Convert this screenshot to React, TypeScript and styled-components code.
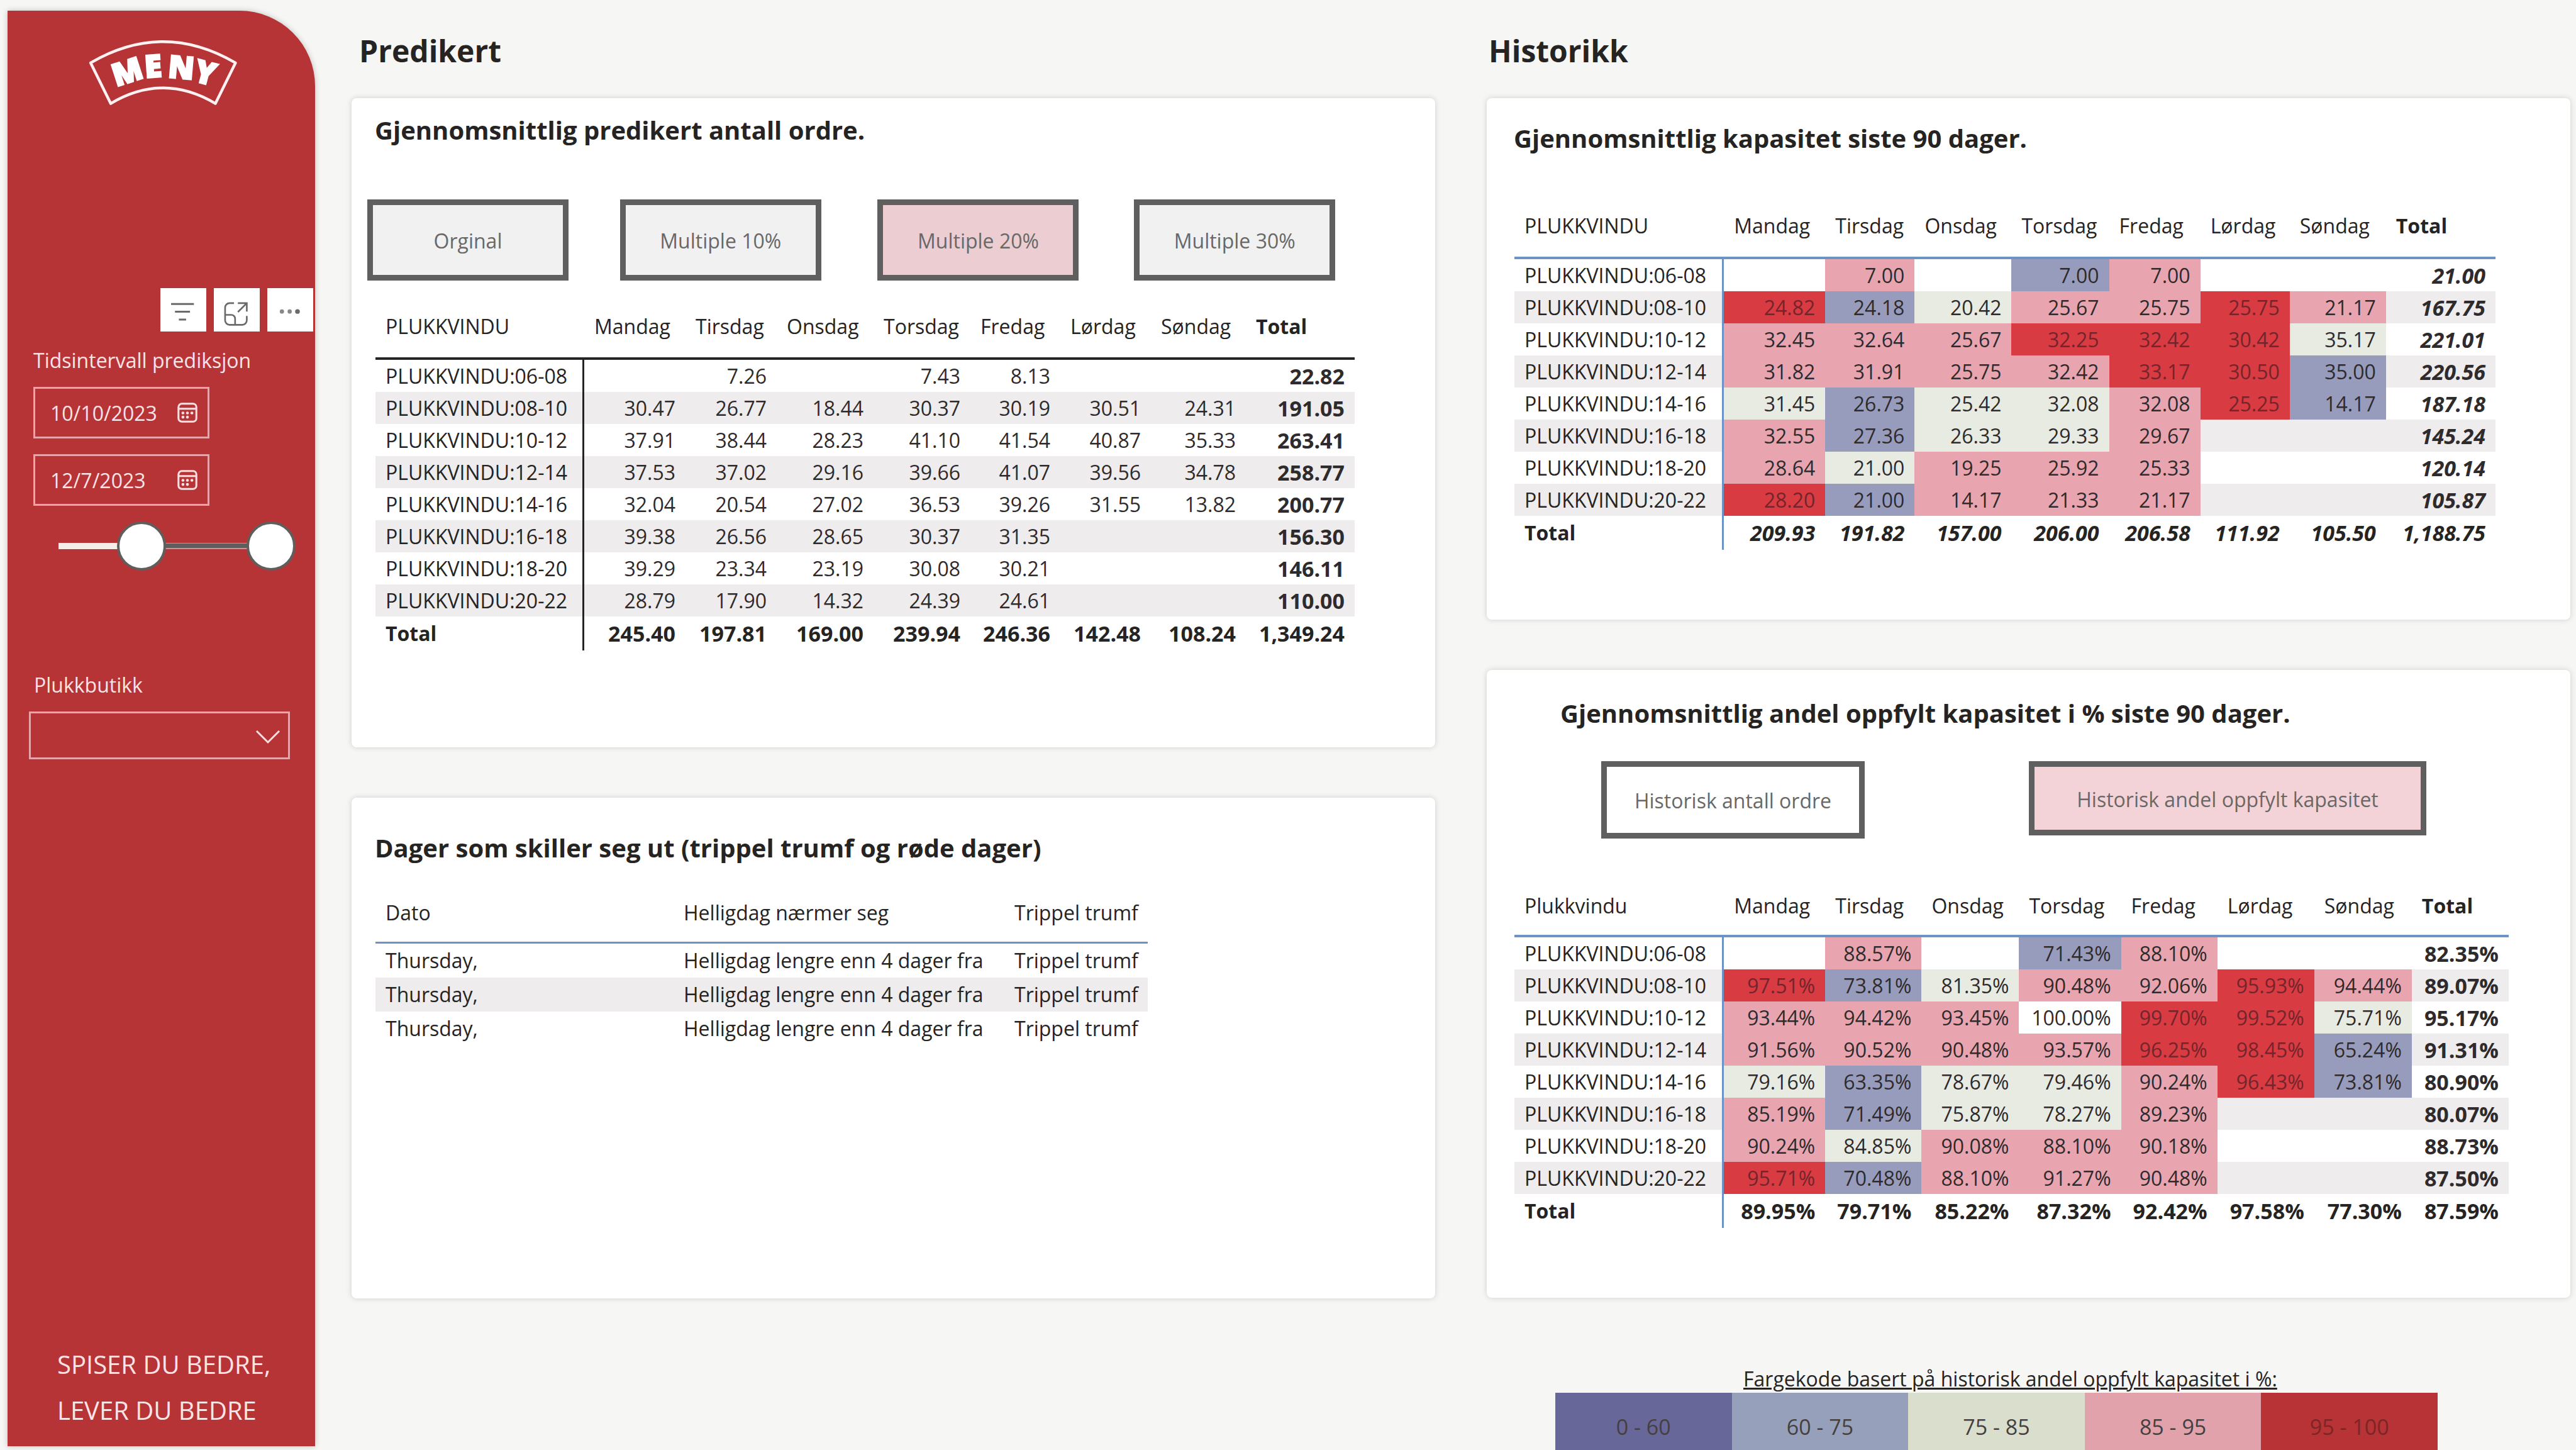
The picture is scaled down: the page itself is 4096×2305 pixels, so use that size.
import React from "react";
import styled, { createGlobalStyle, css } from "styled-components";

const GlobalStyle = createGlobalStyle`
  *, *::before, *::after { box-sizing: border-box; }
  body {
    margin: 0;
    background: #f6f6f5;
    color: #252423;
    font-family: "Open Sans", "Noto Sans", sans-serif;
    font-size: 32px;
  }
  button, input, select { font: inherit; color: inherit; }
  h1, h2, p { margin: 0; }
`;

const Page = styled.div`
  display: grid;
  grid-template-columns: 489px minmax(0, 1fr);
  column-gap: 58px;
  min-height: 100vh;
  padding: 0 9px 0 12px;
`;

/* ---------- Sidebar ---------- */

const Sidebar = styled.aside`
  display: flex;
  flex-direction: column;
  margin: 17px 0 6px;
  padding-top: 36px;
  background: #b63436;
  color: #fbe3e5;
  border-top-right-radius: 120px;
  box-shadow: 0 0 10px rgba(0, 0, 0, 0.22);
`;

const Logo = styled.svg`
  display: block;
  width: 267px;
  height: 124px;
  margin-left: 112px;
`;

const VisualActions = styled.div`
  display: flex;
  justify-content: flex-end;
  gap: 12px;
  margin-top: 281px;
  padding-right: 3px;
`;

const ActionButton = styled.button`
  width: 73px;
  height: 69px;
  padding: 0;
  border: 0;
  background: #fff;

  svg { display: block; width: 100%; height: 100%; }
`;

const FieldLabel = styled.label`
  display: block;
  padding-left: 42px;
  line-height: 44px;
`;

const DateSlicer = styled.fieldset`
  display: flex;
  flex-direction: column;
  gap: 25px;
  min-width: 0;
  margin: 24px 0 0;
  padding: 0;
  border: 0;

  legend {
    padding: 0 0 20px 41px;
    line-height: 44px;
  }
`;

const DateBox = styled.div`
  display: flex;
  align-items: center;
  width: 280px;
  height: 82px;
  margin-left: 41px;
  padding: 0 16px 0 24px;
  border: 3px solid #e9a3a9;

  input {
    width: 100%;
    min-width: 0;
    padding: 0;
    border: 0;
    background: transparent;
    outline: none;
  }
`;

const CalendarButton = styled.button`
  flex: none;
  width: 32px;
  height: 32px;
  padding: 0;
  border: 0;
  background: transparent;

  svg { display: block; width: 32px; height: 32px; }
`;

const RangeSlider = styled.div`
  position: relative;
  width: 416px;
  height: 78px;
  margin: 0 0 0 42px;
`;

const Track = styled.div`
  position: absolute;
  inset: 34px 39px;
  background: #f5efea;
`;

const TrackFill = styled.div`
  height: 100%;
  border: solid #dd8a90;
  border-width: 1px 0 2px;
  background: #605e5c;
`;

const thumb = css`
  appearance: none;
  width: 78px;
  height: 78px;
  border: 4px solid #605e5c;
  border-radius: 50%;
  background: #fff;
  pointer-events: auto;
`;

const Range = styled.input`
  position: absolute;
  inset: 0;
  width: 100%;
  height: 78px;
  margin: 0;
  appearance: none;
  background: transparent;
  pointer-events: none;

  &::-webkit-slider-thumb { ${thumb} }
  &::-moz-range-thumb { ${thumb} }
`;

const StoreField = styled.div`
  margin-top: 160px;
`;

const SelectBox = styled.div`
  position: relative;
  width: 415px;
  margin: 20px 0 0 34px;

  select {
    display: block;
    width: 100%;
    height: 76px;
    padding: 0 80px 0 20px;
    border: 3px solid #e9a3a9;
    border-radius: 0;
    background: transparent;
    appearance: none;
  }

  svg {
    position: absolute;
    right: 15px;
    top: 28px;
    width: 40px;
    height: 24px;
    pointer-events: none;
  }
`;

const Slogan = styled.p`
  margin-top: auto;
  padding: 0 0 21px 79px;
  font-size: 40px;
  line-height: 73px;
`;

/* ---------- Report ---------- */

const Main = styled.main`
  display: grid;
  grid-template-columns: minmax(0, 1fr) minmax(0, 1fr);
  column-gap: 82px;
`;

const Column = styled.section<{ $end?: number }>`
  display: flex;
  flex-direction: column;
  padding-bottom: ${(p) => p.$end ?? 0}px;
`;

const ColumnHeading = styled.h1<{ $inset: number }>`
  padding: 49px 0 43px ${(p) => p.$inset}px;
  font-size: 48px;
  line-height: 64px;
  font-weight: 700;
`;

const Card = styled.article<{ $top: number; $bottom?: number; $grow?: boolean }>`
  flex: ${(p) => (p.$grow ? "1 0 auto" : "none")};
  padding: ${(p) => p.$top}px 0 ${(p) => p.$bottom ?? 0}px;
  border-radius: 8px;
  background: #fff;
  box-shadow: 0 0 10px rgba(0, 0, 0, 0.16);

  & + & { margin-top: 80px; }
`;

const CardTitle = styled.h2<{ $inset: number }>`
  padding-left: ${(p) => p.$inset}px;
  font-size: 40px;
  line-height: 56px;
  font-weight: 700;
`;

const ScenarioButtons = styled.div`
  display: grid;
  grid-template-columns: 402fr 410fr 408fr 321fr;
  margin: 82px 158px 0 25px;
`;

const HistoryButtons = styled.div`
  display: flex;
  justify-content: space-between;
  align-items: flex-start;
  margin: 48px 229px 0 182px;
`;

const ToggleButton = styled.button<{ $w: number; $h: number; $bg: string }>`
  width: ${(p) => p.$w}px;
  height: ${(p) => p.$h}px;
  padding: 2px 0 0;
  border: 9px solid #605f5f;
  background: ${(p) => p.$bg};
  color: #696867;
`;

type Tone = "r" | "p" | "b" | "g" | ".";
const toneColor: Record<Tone, string> = {
  r: "#d83b42",
  p: "#e8a5b0",
  b: "#979cbd",
  g: "#e8ebe2",
  ".": "transparent",
};

const TableWrap = styled.div<{ $top: number; $left: number; $right: number }>`
  margin: ${(p) => p.$top}px ${(p) => p.$right}px 0 ${(p) => p.$left}px;
`;

const DataTable = styled.table<{ $line: string; $head: number; $row: number; $rule: number }>`
  width: 100%;
  table-layout: fixed;
  border-collapse: separate;
  border-spacing: 0;
  line-height: 44px;

  th, td {
    padding: 0 16px;
    font-weight: 400;
    text-align: left;
    white-space: nowrap;
  }
  thead th {
    height: ${(p) => p.$head}px;
    border-bottom: ${(p) => p.$rule}px solid ${(p) => p.$line};
  }
  tbody tr { height: ${(p) => p.$row}px; }
  tbody tr:nth-child(even) { background: #eeecec; }
`;

const Matrix = styled(DataTable)<{ $italic?: boolean }>`
  td { text-align: right; }
  thead th:last-child, tfoot th { font-weight: 700; }
  tbody th, tfoot th { border-right: 3px solid ${(p) => p.$line}; }
  tfoot tr { height: 54px; }
  tfoot td, tbody td:last-child {
    padding-left: 0;
    font-size: 34px;
    font-weight: 700;
    font-style: ${(p) => (p.$italic ? "italic" : "normal")};
  }
`;

const ValueCell = styled.td<{ $tone: Tone }>`
  background: ${(p) => toneColor[p.$tone]};
  color: ${(p) => (p.$tone === "r" ? "#74242a" : "#2f2a2b")};
`;

/* ---------- Legend ---------- */

const Legend = styled.section`
  flex: 1;
  display: flex;
  flex-direction: column;
  margin: 107px 211px 0 109px;
`;

const LegendTitle = styled.h2`
  padding-left: 299px;
  font-size: 32px;
  font-weight: 400;
  line-height: 44px;
  text-decoration: underline;
`;

const LegendScale = styled.ul`
  flex: 1;
  display: grid;
  grid-template-columns: repeat(5, 1fr);
  margin: 0;
  padding: 0;
  list-style: none;
`;

const LegendStep = styled.li<{ $bg: string; $fg?: string }>`
  padding-top: 30px;
  background: ${(p) => p.$bg};
  color: ${(p) => p.$fg ?? "#45403f"};
  font-size: 34px;
  line-height: 48px;
  text-align: center;
`;

/* ---------- Data ---------- */

const days = ["Mandag", "Tirsdag", "Onsdag", "Torsdag", "Fredag", "Lørdag", "Søndag", "Total"];

type MatrixRow = { slot: string; values: string[]; tones?: string };

const predicted: MatrixRow[] = [
  { slot: "06-08", values: ["", "7.26", "", "7.43", "8.13", "", "", "22.82"] },
  { slot: "08-10", values: ["30.47", "26.77", "18.44", "30.37", "30.19", "30.51", "24.31", "191.05"] },
  { slot: "10-12", values: ["37.91", "38.44", "28.23", "41.10", "41.54", "40.87", "35.33", "263.41"] },
  { slot: "12-14", values: ["37.53", "37.02", "29.16", "39.66", "41.07", "39.56", "34.78", "258.77"] },
  { slot: "14-16", values: ["32.04", "20.54", "27.02", "36.53", "39.26", "31.55", "13.82", "200.77"] },
  { slot: "16-18", values: ["39.38", "26.56", "28.65", "30.37", "31.35", "", "", "156.30"] },
  { slot: "18-20", values: ["39.29", "23.34", "23.19", "30.08", "30.21", "", "", "146.11"] },
  { slot: "20-22", values: ["28.79", "17.90", "14.32", "24.39", "24.61", "", "", "110.00"] },
];
const predictedTotal = ["245.40", "197.81", "169.00", "239.94", "246.36", "142.48", "108.24", "1,349.24"];

const capacity: MatrixRow[] = [
  { slot: "06-08", tones: ".p.bp..", values: ["", "7.00", "", "7.00", "7.00", "", "", "21.00"] },
  { slot: "08-10", tones: "rbgpprp", values: ["24.82", "24.18", "20.42", "25.67", "25.75", "25.75", "21.17", "167.75"] },
  { slot: "10-12", tones: "ppprrrg", values: ["32.45", "32.64", "25.67", "32.25", "32.42", "30.42", "35.17", "221.01"] },
  { slot: "12-14", tones: "pppprrb", values: ["31.82", "31.91", "25.75", "32.42", "33.17", "30.50", "35.00", "220.56"] },
  { slot: "14-16", tones: "gbggprb", values: ["31.45", "26.73", "25.42", "32.08", "32.08", "25.25", "14.17", "187.18"] },
  { slot: "16-18", tones: "pbggp..", values: ["32.55", "27.36", "26.33", "29.33", "29.67", "", "", "145.24"] },
  { slot: "18-20", tones: "pgppp..", values: ["28.64", "21.00", "19.25", "25.92", "25.33", "", "", "120.14"] },
  { slot: "20-22", tones: "rbppp..", values: ["28.20", "21.00", "14.17", "21.33", "21.17", "", "", "105.87"] },
];
const capacityTotal = ["209.93", "191.82", "157.00", "206.00", "206.58", "111.92", "105.50", "1,188.75"];

const filled: MatrixRow[] = [
  { slot: "06-08", tones: ".p.bp..", values: ["", "88.57%", "", "71.43%", "88.10%", "", "", "82.35%"] },
  { slot: "08-10", tones: "rbgpprp", values: ["97.51%", "73.81%", "81.35%", "90.48%", "92.06%", "95.93%", "94.44%", "89.07%"] },
  { slot: "10-12", tones: "ppp.rrg", values: ["93.44%", "94.42%", "93.45%", "100.00%", "99.70%", "99.52%", "75.71%", "95.17%"] },
  { slot: "12-14", tones: "pppprrb", values: ["91.56%", "90.52%", "90.48%", "93.57%", "96.25%", "98.45%", "65.24%", "91.31%"] },
  { slot: "14-16", tones: "gbggprb", values: ["79.16%", "63.35%", "78.67%", "79.46%", "90.24%", "96.43%", "73.81%", "80.90%"] },
  { slot: "16-18", tones: "pbggp..", values: ["85.19%", "71.49%", "75.87%", "78.27%", "89.23%", "", "", "80.07%"] },
  { slot: "18-20", tones: "pgppp..", values: ["90.24%", "84.85%", "90.08%", "88.10%", "90.18%", "", "", "88.73%"] },
  { slot: "20-22", tones: "rbppp..", values: ["95.71%", "70.48%", "88.10%", "91.27%", "90.48%", "", "", "87.50%"] },
];
const filledTotal = ["89.95%", "79.71%", "85.22%", "87.32%", "92.42%", "97.58%", "77.30%", "87.59%"];

const legend = [
  { label: "0 - 60", bg: "#68679a" },
  { label: "60 - 75", bg: "#96a0bb" },
  { label: "75 - 85", bg: "#d9decd" },
  { label: "85 - 95", bg: "#e2a2ab" },
  { label: "95 - 100", bg: "#b83335", fg: "#7d2526" },
];

/* ---------- Parts ---------- */

type MatrixProps = {
  corner: string;
  rows: MatrixRow[];
  total: string[];
  columns: number[];
  line: string;
  head: number;
  italic?: boolean;
};

function SlotMatrix({ corner, rows, total, columns, line, head, italic }: MatrixProps) {
  return (
    <Matrix $line={line} $head={head} $row={51} $rule={4} $italic={italic}>
      <colgroup>
        {columns.map((w, i) => (
          <col key={i} width={w} />
        ))}
      </colgroup>
      <thead>
        <tr>
          <th scope="col">{corner}</th>
          {days.map((d) => (
            <th key={d} scope="col">{d}</th>
          ))}
        </tr>
      </thead>
      <tbody>
        {rows.map((r) => (
          <tr key={r.slot}>
            <th scope="row">PLUKKVINDU:{r.slot}</th>
            {r.values.map((v, i) => (
              <ValueCell key={i} $tone={(r.tones?.[i] ?? ".") as Tone}>{v}</ValueCell>
            ))}
          </tr>
        ))}
      </tbody>
      <tfoot>
        <tr>
          <th scope="row">Total</th>
          {total.map((v, i) => (
            <td key={i}>{v}</td>
          ))}
        </tr>
      </tfoot>
    </Matrix>
  );
}

function CalendarIcon() {
  return (
    <svg viewBox="0 0 36 36" fill="none" stroke="#fbdfe2" strokeWidth="3.4" aria-hidden="true">
      <rect x="2" y="2" width="32" height="32" rx="6" />
      <path d="M2 11h32" />
      <g fill="#fbdfe2" stroke="none">
        <circle cx="10" cy="18.5" r="2.6" />
        <circle cx="18" cy="18.5" r="2.6" />
        <circle cx="26" cy="18.5" r="2.6" />
        <circle cx="10" cy="26" r="2.6" />
        <circle cx="18" cy="26" r="2.6" />
      </g>
    </svg>
  );
}

function DateField({ label, value }: { label: string; value: string }) {
  return (
    <DateBox>
      <input type="text" aria-label={label} defaultValue={value} />
      <CalendarButton type="button" aria-label={label}>
        <CalendarIcon />
      </CalendarButton>
    </DateBox>
  );
}

export default function App() {
  const [from, setFrom] = React.useState(39);
  const [to, setTo] = React.useState(100);

  return (
    <>
      <GlobalStyle />
      <Page>
        <Sidebar>
          <Logo viewBox="0 0 300 140" role="img" aria-label="MENY">
            <path
              d="M22 53Q152 -23 282 53L246 126Q152 70 58 126Z"
              fill="none"
              stroke="#fff0f1"
              strokeWidth="5"
              strokeLinejoin="round"
            />
            <text
              x="68 120 160 205"
              y="96 80 79 85"
              rotate="-18 -4 5 15"
              fill="#fff"
              stroke="#fff"
              strokeWidth="3"
              fontFamily="Open Sans"
              fontWeight="800"
              fontSize="56"
            >
              MENY
            </text>
          </Logo>

          <VisualActions>
            <ActionButton type="button" aria-label="Filter">
              <svg viewBox="0 0 82 78" stroke="#6b6a69" strokeWidth="3.4" fill="none">
                <path d="M19 28.500H60M26 42.500H53M33 56.500H46" />
              </svg>
            </ActionButton>
            <ActionButton type="button" aria-label="Fokusmodus">
              <svg viewBox="0 0 82 78" stroke="#6b6a69" strokeWidth="3" fill="none">
                <path d="M36 27H28a8 8 0 0 0-8 8V58a8 8 0 0 0 8 8H51a8 8 0 0 0 8-8V50" />
                <path d="M20 48H31a7 7 0 0 1 7 7V66M43 27H59V42M43 43L59 27" />
              </svg>
            </ActionButton>
            <ActionButton type="button" aria-label="Flere valg">
              <svg viewBox="0 0 82 78" fill="#6b6a69">
                <circle cx="26" cy="42" r="3.800" opacity="0.8" />
                <circle cx="40" cy="42" r="3.800" opacity="0.8" />
                <circle cx="54" cy="42" r="4.200" />
              </svg>
            </ActionButton>
          </VisualActions>

          <DateSlicer>
            <legend>Tidsintervall prediksjon</legend>
            <DateField label="Fra dato" value="10/10/2023" />
            <DateField label="Til dato" value="12/7/2023" />
            <RangeSlider>
              <Track>
                <TrackFill style={{ marginLeft: `${from}%`, width: `${to - from}%` }} />
              </Track>
              <Range
                type="range"
                aria-label="Fra"
                value={from}
                onChange={(e) => setFrom(Math.min(Number(e.target.value), to))}
              />
              <Range
                type="range"
                aria-label="Til"
                value={to}
                onChange={(e) => setTo(Math.max(Number(e.target.value), from))}
              />
            </RangeSlider>
          </DateSlicer>

          <StoreField>
            <FieldLabel htmlFor="store">Plukkbutikk</FieldLabel>
            <SelectBox>
              <select id="store" defaultValue="">
                <option value="" />
              </select>
              <svg viewBox="0 0 40 24" fill="none" stroke="#fbdfe2" strokeWidth="3" aria-hidden="true">
                <path d="M2 3L20 21L38 3" />
              </svg>
            </SelectBox>
          </StoreField>

          <Slogan>
            SPISER DU BEDRE,
            <br />
            LEVER DU BEDRE
          </Slogan>
        </Sidebar>

        <Main>
          <Column $end={241}>
            <ColumnHeading $inset={12}>Predikert</ColumnHeading>

            <Card $top={23} $bottom={154}>
              <CardTitle $inset={37}>Gjennomsnittlig predikert antall ordre.</CardTitle>
              <ScenarioButtons>
                <ToggleButton type="button" $w={320} $h={129} $bg="#f1f1f1">Orginal</ToggleButton>
                <ToggleButton type="button" $w={320} $h={129} $bg="#f1f1f1">Multiple 10%</ToggleButton>
                <ToggleButton type="button" $w={320} $h={129} $bg="#ebcdd2">Multiple 20%</ToggleButton>
                <ToggleButton type="button" $w={320} $h={129} $bg="#f1f1f1">Multiple 30%</ToggleButton>
              </ScenarioButtons>
              <TableWrap $top={24} $left={38} $right={129}>
                <SlotMatrix
                  corner="PLUKKVINDU"
                  rows={predicted}
                  total={predictedTotal}
                  columns={[332, 161, 145, 154, 154, 143, 144, 151, 173]}
                  line="#252423"
                  head={102}
                />
              </TableWrap>
            </Card>

            <Card $top={52} $grow>
              <CardTitle $inset={37}>Dager som skiller seg ut (trippel trumf og røde dager)</CardTitle>
              <TableWrap $top={29} $left={38} $right={458}>
                <DataTable $line="#6b93c4" $head={95} $row={54} $rule={3}>
                  <colgroup>
                    <col width={474} />
                    <col width={526} />
                    <col width={228} />
                  </colgroup>
                  <thead>
                    <tr>
                      <th scope="col">Dato</th>
                      <th scope="col">Helligdag nærmer seg</th>
                      <th scope="col">Trippel trumf</th>
                    </tr>
                  </thead>
                  <tbody>
                    {[0, 1, 2].map((i) => (
                      <tr key={i}>
                        <td>Thursday,</td>
                        <td>Helligdag lengre enn 4 dager fra</td>
                        <td>Trippel trumf</td>
                      </tr>
                    ))}
                  </tbody>
                </DataTable>
              </TableWrap>
            </Card>
          </Column>

          <Column>
            <ColumnHeading $inset={3}>Historikk</ColumnHeading>

            <Card $top={36} $bottom={111}>
              <CardTitle $inset={43}>Gjennomsnittlig kapasitet siste 90 dager.</CardTitle>
              <TableWrap $top={62} $left={44} $right={119}>
                <SlotMatrix
                  corner="PLUKKVINDU"
                  rows={capacity}
                  total={capacityTotal}
                  columns={[333, 161, 142, 154, 155, 145, 142, 153, 174]}
                  line="#6b93c4"
                  head={102}
                  italic
                />
              </TableWrap>
            </Card>

            <Card $top={41} $bottom={111}>
              <CardTitle $inset={117}>Gjennomsnittlig andel oppfylt kapasitet i % siste 90 dager.</CardTitle>
              <HistoryButtons>
                <ToggleButton type="button" $w={419} $h={123} $bg="#fff">Historisk antall ordre</ToggleButton>
                <ToggleButton type="button" $w={632} $h={118} $bg="#f3d3d8">Historisk andel oppfylt kapasitet</ToggleButton>
              </HistoryButtons>
              <TableWrap $top={61} $left={44} $right={98}>
                <SlotMatrix
                  corner="Plukkvindu"
                  rows={filled}
                  total={filledTotal}
                  columns={[333, 161, 153, 155, 162, 153, 154, 155, 154]}
                  line="#6b93c4"
                  head={96}
                />
              </TableWrap>
            </Card>

            <Legend>
              <LegendTitle>Fargekode basert på historisk andel oppfylt kapasitet i %:</LegendTitle>
              <LegendScale>
                {legend.map((s) => (
                  <LegendStep key={s.label} $bg={s.bg} $fg={s.fg}>{s.label}</LegendStep>
                ))}
              </LegendScale>
            </Legend>
          </Column>
        </Main>
      </Page>
    </>
  );
}
